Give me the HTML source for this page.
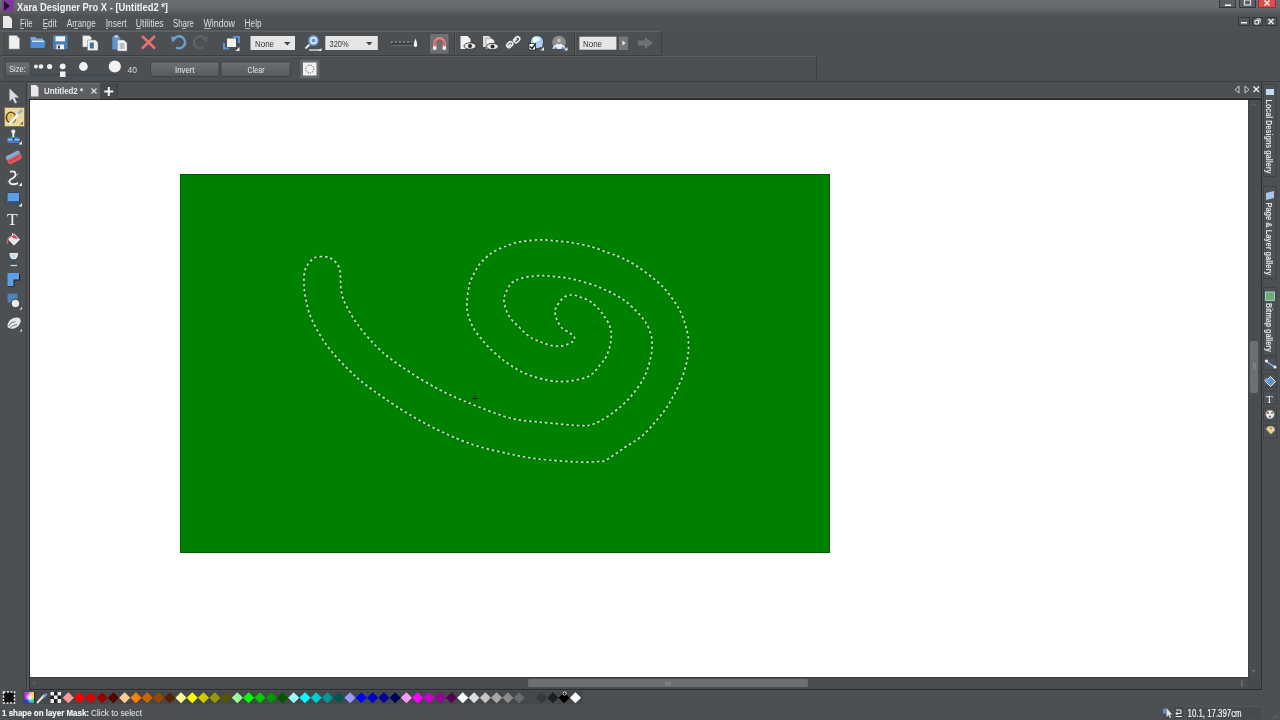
<!DOCTYPE html>
<html><head><meta charset="utf-8">
<style>
*{box-sizing:border-box}
html,body{margin:0;padding:0;width:1280px;height:720px;overflow:hidden;background:#4d5053;font-family:"Liberation Sans",sans-serif;color:#e6e6e6}
.a{position:absolute}
svg{position:absolute;left:0;top:0}
</style></head><body>
<!-- title + menu gradient -->
<div class="a" style="left:0;top:0;width:1280px;height:31px;background:linear-gradient(180deg,#6a6d71 0px,#66696d 7px,#56595c 13px,#4f5255 16px,#4e5154 30px)"></div>
<div class="a" style="left:0;top:29px;width:662px;height:1px;background:#46494c"></div>
<div class="a" style="left:0;top:30px;width:662px;height:1px;background:#5b5e61"></div>
<!-- toolbars -->
<div class="a" style="left:1px;top:31px;width:661px;height:25px;background:#4d5053;border-top:1px solid #5d6063;border-left:1px solid #5a5d60;border-right:1px solid #3c3e40;border-bottom:1px solid #3c3e40"></div>
<div class="a" style="left:1px;top:56px;width:816px;height:26px;background:#4d5053;border-top:1px solid #5d6063;border-left:1px solid #5a5d60;border-right:1px solid #3c3e40;border-bottom:1px solid #3c3e40"></div>
<div class="a" style="left:0;top:81px;width:1280px;height:1px;background:#3c3e41"></div>
<div class="a" style="left:28px;top:97px;width:1234px;height:1px;background:#5c5f62"></div>
<!-- canvas area frame -->
<div class="a" style="left:29px;top:98px;width:1233px;height:592px;background:#47494c;border:1px solid #2a2c2e;border-top:2px solid #2a2c2e"></div>
<div class="a" style="left:30px;top:100px;width:1218px;height:577px;background:#ffffff"></div>
<!-- vertical scrollbar -->
<div class="a" style="left:1248px;top:100px;width:12px;height:577px;background:#4a4d50;border-left:1px solid #424447"></div>
<div class="a" style="left:1250px;top:341px;width:8px;height:52px;background:#6d7073;border-radius:2px"></div>
<!-- horizontal scrollbar -->
<div class="a" style="left:30px;top:677px;width:1218px;height:11px;background:#4a4d50;border-top:1px solid #3a3c3f"></div>
<div class="a" style="left:528px;top:679px;width:280px;height:8px;background:#6d7073;border-radius:2px"></div>
<!-- left toolbox separator -->
<div class="a" style="left:26px;top:82px;width:1px;height:608px;background:#3a3c3f"></div>
<div class="a" style="left:27px;top:82px;width:2px;height:608px;background:#55585b"></div>
<!-- tab row -->
<div class="a" style="left:28px;top:83px;width:72px;height:16px;background:#5d6063;border-top:1px solid #6a6d70"></div>
<div class="a" style="left:100px;top:83px;width:18px;height:16px;background:#46494c;border-right:1px solid #3a3c3f"></div>
<!-- right gallery bar line -->
<div class="a" style="left:1261px;top:82px;width:1px;height:608px;background:#2f3133"></div>

<!-- green rectangle -->
<div class="a" style="left:180px;top:174px;width:650px;height:379px;background:#008000;border:1px solid #005a00"></div>

<!-- title text -->


<svg width="1280" height="720" viewBox="0 0 1280 720" font-family="Liberation Sans" style="will-change:transform">
<text x="17" y="10.5" font-size="10.5" font-weight="bold" fill="#f0f0f0" textLength="151" lengthAdjust="spacingAndGlyphs">Xara Designer Pro X - [Untitled2 *]</text>
<!-- Xara logo -->
<rect x="2" y="0" width="12" height="12" fill="#7d3c98"/>
<path d="M4,1 L10,6 L4,11 Z" fill="#2b0d3a"/>
<!-- window buttons -->
<rect x="1219.5" y="-1" width="16" height="8.5" fill="#5a5d61" stroke="#36393c"/>
<rect x="1225" y="4.5" width="6" height="1.5" fill="#ffffff"/>
<rect x="1239.5" y="-1" width="16" height="8.5" fill="#5a5d61" stroke="#36393c"/>
<rect x="1244.5" y="0" width="6" height="5" fill="none" stroke="#e0e0e0" stroke-width="1.2"/>
<rect x="1258.5" y="-1" width="17" height="8.5" fill="#de4c4c" stroke="#9a3030"/>
<path d="M1264.5,0.5 L1269.5,5.5 M1269.5,0.5 L1264.5,5.5" stroke="#ffe8e8" stroke-width="1.6"/>
<!-- MDI buttons -->
<rect x="1238.5" y="17.5" width="11" height="8" fill="#55585c" stroke="#333538"/>
<rect x="1241" y="22" width="6" height="1.5" fill="#f0f0f0"/>
<rect x="1252.5" y="17.5" width="10" height="8" fill="#55585c" stroke="#333538"/>
<path d="M1255,20.5 h3.5 v3.5 h-3.5 z M1256.5,19 h3.5 v3.5" fill="none" stroke="#f0f0f0" stroke-width="1"/>
<rect x="1265.5" y="17.5" width="11" height="8" fill="#55585c" stroke="#333538"/>
<path d="M1268.5,19 L1273.5,24 M1273.5,19 L1268.5,24" stroke="#f0f0f0" stroke-width="1.4"/>

<!-- menu doc icon -->
<path d="M3,16 h6 l3,3 v9 h-9 z" fill="#e8e8e8"/>
<!-- menu -->
<g font-size="10" fill="#dedede">
<text x="20" y="26.5" textLength="12.5" lengthAdjust="spacingAndGlyphs">File</text>
<text x="42.7" y="26.5" textLength="14" lengthAdjust="spacingAndGlyphs">Edit</text>
<text x="66.7" y="26.5" textLength="29" lengthAdjust="spacingAndGlyphs">Arrange</text>
<text x="105.7" y="26.5" textLength="21" lengthAdjust="spacingAndGlyphs">Insert</text>
<text x="135.7" y="26.5" textLength="28" lengthAdjust="spacingAndGlyphs">Utilities</text>
<text x="173" y="26.5" textLength="21" lengthAdjust="spacingAndGlyphs">Share</text>
<text x="203.5" y="26.5" textLength="31.5" lengthAdjust="spacingAndGlyphs">Window</text>
<text x="244.6" y="26.5" textLength="17" lengthAdjust="spacingAndGlyphs">Help</text>
</g>
<g stroke="#cfcfcf" stroke-width="0.8">
<path d="M20,28.5 h4 M43,28.5 h4 M74,28.5 h4 M106,28.5 h2 M136,28.5 h5 M182,28.5 h4 M204,28.5 h7 M245,28.5 h5"/>
</g>

<!-- ===== Toolbar row 1 ===== -->
<!-- new -->
<path d="M9,35.5 h7.5 l3,3 v10.5 h-10.5 z" fill="#f0f0f0" stroke="#9a9a9a" stroke-width="0.6"/>
<path d="M16.5,35.5 v3 h3" fill="#c8c8c8"/>
<!-- open -->
<path d="M30.5,37 h5 l1.5,1.5 h6 v2 h-12.5 z" fill="#7aa8d8"/>
<path d="M30.5,40.5 h15 l-1,7.5 h-14 z" fill="#4e8fd6"/>
<path d="M32,40.5 h12 v1.5 h-12 z" fill="#dbe9f7"/>
<!-- save -->
<rect x="53" y="35.2" width="14.5" height="14" rx="1" fill="#4c7fb8"/>
<rect x="55.5" y="36.3" width="9.5" height="5" fill="#f4f4f4"/>
<rect x="56.5" y="44.5" width="7.5" height="4.7" fill="#f4f4f4"/>
<rect x="58" y="45.5" width="1.8" height="3" fill="#333"/>
<!-- copy -->
<path d="M82.5,35.6 h7 l2,2 v9.5 h-9 z" fill="#efefef" stroke="#777" stroke-width="0.5"/>
<path d="M87.5,40 h8 l2.5,2.5 v8 h-10.5 z" fill="#efefef" stroke="#777" stroke-width="0.5"/>
<rect x="89.8" y="42.5" width="4" height="6" fill="#3d6ea8"/>
<!-- paste -->
<rect x="112.3" y="36.5" width="8" height="13" rx="1" fill="#5d95d0"/>
<rect x="114.5" y="35.3" width="3.5" height="2" fill="#dde"/>
<path d="M117.5,40 h6.5 l3,3 v8 h-9.5 z" fill="#f0f0f0" stroke="#888" stroke-width="0.5"/>
<path d="M119.5,44 h5 M119.5,46 h5 M119.5,48 h5" stroke="#666" stroke-width="0.7"/>
<!-- delete -->
<path d="M142.8,36.8 L154.2,47.8 M154.2,36.8 L142.8,47.8" stroke="#e67272" stroke-width="2.6" stroke-linecap="round"/>
<!-- undo -->
<path d="M174,39 A6,6 0 1 1 176,47.5" fill="none" stroke="#6b9fd6" stroke-width="2.4"/>
<path d="M171,36.5 L177.5,37.5 L172.5,42.5 Z" fill="#6b9fd6"/>
<!-- redo disabled -->
<path d="M205,39 A6,6 0 1 0 203,47.5" fill="none" stroke="#5f6265" stroke-width="2.4"/>
<path d="M208,36.5 L201.5,37.5 L206.5,42.5 Z" fill="#5f6265"/>
<!-- arrange -->
<path d="M224,43 v5.5 h5" fill="none" stroke="#5b93cf" stroke-width="2"/>
<path d="M239,43 v-6 h-6" fill="none" stroke="#5b93cf" stroke-width="2"/>
<rect x="227" y="38.5" width="9" height="8.5" fill="#f2f2f2"/>
<path d="M235.5,51 h4 v-4 z" fill="#f0f0f0"/>

<!-- None dropdown -->
<rect x="250.5" y="36" width="44.5" height="14" fill="#e6e6e6"/>
<text x="255" y="46.5" font-size="9.5" fill="#333" textLength="19" lengthAdjust="spacingAndGlyphs">None</text>
<path d="M284,42 h6.5 l-3.25,3.5 z" fill="#444"/>
<!-- zoom icon -->
<circle cx="313.5" cy="40.5" r="4.7" fill="#cfe0f5" stroke="#5a8fc8" stroke-width="1.6"/>
<circle cx="313.5" cy="40.5" r="1.8" fill="#5a8fc8"/>
<path d="M309.5,44.5 L305.5,48.5" stroke="#e8e8e8" stroke-width="2"/>
<path d="M309,50 h11" stroke="#e8e8e8" stroke-width="1.3"/>
<path d="M318,51 h3.5 v-3 z" fill="#eee"/>
<!-- 320% dropdown -->
<rect x="325.3" y="36" width="52.5" height="14" fill="#e6e6e6"/>
<text x="329.5" y="46.5" font-size="9.5" fill="#333" textLength="19" lengthAdjust="spacingAndGlyphs">320%</text>
<path d="M366,42 h6.5 l-3.25,3.5 z" fill="#444"/>
<!-- ruler -->
<path d="M391,42.2 h21" stroke="#e6e6e6" stroke-width="1" stroke-dasharray="1.5 2.6"/>
<path d="M391,43.3 h22" stroke="#2e3033" stroke-width="1"/>
<path d="M391,45.8 h22" stroke="#6a6d70" stroke-width="0.8"/>
<path d="M415.5,38.5 q1.7,4 1.7,6.5 q0,2 -1.7,2 q-1.7,0 -1.7,-2 q0,-2.5 1.7,-6.5 z" fill="#f4f4f4"/>
<path d="M418,40 l1.5,6 l1.5,-6" fill="none" stroke="#404346" stroke-width="0.7"/>
<!-- magnet button -->
<rect x="429.5" y="33.5" width="19.5" height="20.5" fill="#6d7073" stroke="#45484b" stroke-width="0.8"/>
<path d="M434.7,47 v-3.5 a4.8,4.8 0 0 1 9.6,0 v3.5" fill="none" stroke="#e88282" stroke-width="3.2"/>
<path d="M434.7,43.5 a4.8,4.8 0 0 1 9.6,0" fill="none" stroke="#6a3030" stroke-width="0.6" transform="translate(0,1.2) scale(1)"/>
<rect x="433" y="46.5" width="3.4" height="3.2" fill="#f8f8f8"/>
<rect x="442.6" y="46.5" width="3.4" height="3.2" fill="#f8f8f8"/>
<!-- separators -->
<path d="M454.5,32 v23" stroke="#3a3c3f"/>
<path d="M455.5,32 v23" stroke="#5a5d60"/>
<path d="M574.5,32 v23" stroke="#3a3c3f"/>
<path d="M575.5,32 v23" stroke="#5a5d60"/>
<!-- page eye -->
<path d="M460.5,36 h7 l3,3 v10 h-10 z" fill="#f0f0f0"/>
<ellipse cx="470" cy="46" rx="6" ry="3.2" fill="#e8e8e8" stroke="#222" stroke-width="0.8"/>
<circle cx="470" cy="46" r="2" fill="#2a2a2a"/>
<!-- pages eye -->
<path d="M483,36 h6 l2,2 v9 h-8 z" fill="#dcdcdc"/>
<path d="M486,38.5 h6 l2.5,2.5 v8 h-8.5 z" fill="#f0f0f0" stroke="#666" stroke-width="0.4"/>
<ellipse cx="492.5" cy="46.5" rx="6" ry="3.2" fill="#e8e8e8" stroke="#222" stroke-width="0.8"/>
<circle cx="492.5" cy="46.5" r="2" fill="#2a2a2a"/>
<!-- link -->
<path d="M508,47 l3,-3 M513.5,41.5 l3,-3" stroke="#eaeaea" stroke-width="2.2"/>
<rect x="506.5" y="42.5" width="6.5" height="4.5" rx="2.2" transform="rotate(-45 509.7 44.7)" fill="none" stroke="#eaeaea" stroke-width="1.6"/>
<rect x="513.5" y="37.5" width="6.5" height="4.5" rx="2.2" transform="rotate(-45 516.7 39.7)" fill="none" stroke="#eaeaea" stroke-width="1.6"/>
<!-- globe check -->
<circle cx="537" cy="42" r="6.6" fill="#a8ccf0" stroke="#2a3a4a" stroke-width="0.8"/>
<path d="M533,37.5 q4,-1.5 7,1 q-1,3.5 -4,3 q-1,2 -3,1 z" fill="#f2f8ff"/>
<path d="M539,44 q2,1 3,3" stroke="#f0f6ff" stroke-width="1" fill="none"/>
<rect x="529" y="43.5" width="6.5" height="6.5" fill="#fff" stroke="#222" stroke-width="0.8"/>
<path d="M530,46.5 l2,2 l3,-4" fill="none" stroke="#111" stroke-width="1.3"/>
<path d="M540.5,50.5 h3.5 v-3.5 z" fill="#eee"/>
<!-- cloud -->
<circle cx="559" cy="42.5" r="6.8" fill="#8a8d90"/>
<circle cx="559" cy="40.5" r="2" fill="#c8b8b8"/>
<path d="M552.5,49 q0.5,-3.5 3,-4 q1.5,-2 3.5,-0.5 q2,-1.5 3.5,0.5 q2.5,0.5 3,4 z" fill="#e6eef8"/>
<path d="M553.5,49 q1,-2 2.5,-2.2 l1.5,2.2 M561,49 l1.5,-2.2 q1.5,0.2 2.5,2.2" fill="#5f95d0"/>
<path d="M564,50.5 h3.5 v-3.5 z" fill="#eee"/>
<!-- None box 2 -->
<rect x="579.4" y="36.7" width="37" height="13" fill="#e6e6e6"/>
<text x="583" y="46.7" font-size="9.5" fill="#333" textLength="19" lengthAdjust="spacingAndGlyphs">None</text>
<rect x="619" y="36.5" width="9" height="13.5" fill="#75787b"/>
<path d="M622.5,40.5 l3,2.5 l-3,2.5 z" fill="#f0f0f0"/>
<!-- arrow right gray -->
<path d="M638,40.5 h7 v-3.5 l8,6 l-8,6 v-3.5 h-7 z" fill="#6e7174"/>

<!-- ===== Toolbar row 2 ===== -->
<rect x="5.5" y="62" width="24.5" height="14" rx="1" fill="url(#btn)" stroke="#3f4143" stroke-width="0.6"/>
<text x="9" y="72.3" font-size="9.5" fill="#e4e4e4" textLength="17" lengthAdjust="spacingAndGlyphs">Size:</text>
<path d="M32.5,75 h85" stroke="#3a4a58" stroke-width="1.6"/>
<circle cx="35.9" cy="66.5" r="1.9" fill="#f2f2f2"/>
<circle cx="41" cy="66.5" r="2.3" fill="#f2f2f2"/>
<circle cx="49.6" cy="66.5" r="2.6" fill="#f2f2f2"/>
<circle cx="62.7" cy="66.3" r="2.9" fill="#f2f2f2"/>
<circle cx="83.4" cy="66.5" r="4.4" fill="#f2f2f2"/>
<circle cx="114.8" cy="66.5" r="6.1" fill="#f2f2f2"/>
<rect x="60" y="71.5" width="5.5" height="5.5" fill="#f2f2f2"/>
<text x="127.5" y="72.8" font-size="9.5" fill="#d8d8d8" textLength="9.5" lengthAdjust="spacingAndGlyphs">40</text>
<!-- Invert / Clear buttons -->
<defs>
<linearGradient id="btn" x1="0" y1="0" x2="0" y2="1">
<stop offset="0" stop-color="#6e7174"/><stop offset="1" stop-color="#56595c"/>
</linearGradient>
</defs>
<rect x="150.5" y="62" width="68.5" height="14.5" rx="1.5" fill="url(#btn)" stroke="#3c3e40" stroke-width="0.8"/>
<text x="175" y="72.5" font-size="9.5" fill="#e8e8e8" textLength="19.5" lengthAdjust="spacingAndGlyphs">Invert</text>
<rect x="221" y="62" width="69" height="14.5" rx="1.5" fill="url(#btn)" stroke="#3c3e40" stroke-width="0.8"/>
<text x="247.5" y="72.5" font-size="9.5" fill="#e8e8e8" textLength="17" lengthAdjust="spacingAndGlyphs">Clear</text>
<rect x="300" y="59.6" width="19.5" height="19" fill="#66696c" stroke="#55585a" stroke-width="0.8"/>
<rect x="303" y="62.5" width="13.5" height="13" fill="#f2f2f2"/>
<circle cx="309.8" cy="69" r="4" fill="none" stroke="#555" stroke-width="1" stroke-dasharray="1.2 1.2"/>

<!-- ===== Tab row ===== -->
<path d="M31,85 h5 l2.5,2.5 v9 h-7.5 z" fill="#e8e8e8"/>
<text x="44" y="94" font-size="9.5" font-weight="bold" fill="#ececec" textLength="39" lengthAdjust="spacingAndGlyphs">Untitled2 *</text>
<path d="M91.5,88.5 L96.5,93.5 M96.5,88.5 L91.5,93.5" stroke="#e0e0e0" stroke-width="1.2"/>
<path d="M108.8,87 v9 M104.3,91.5 h9" stroke="#f4f4f4" stroke-width="2"/>
<!-- tab right arrows -->
<path d="M1239,86 v7 l-4,-3.5 z" fill="none" stroke="#d8d8d8" stroke-width="0.9"/>
<path d="M1245,86 v7 l4,-3.5 z" fill="none" stroke="#d8d8d8" stroke-width="0.9"/>
<path d="M1253.5,86.5 L1259,92 M1259,86.5 L1253.5,92" stroke="#eeeeee" stroke-width="1.4"/>

<!-- ===== Left toolbox ===== -->
<path d="M9.5,88.5 v13 l3,-3 l2.5,5 l2,-1 l-2.5,-5 h4.5 z" fill="#dcdcdc"/>
<rect x="4.5" y="107.5" width="20" height="19" fill="#ecd898" stroke="#7a6a40" stroke-width="0.7"/>
<ellipse cx="11" cy="117.5" rx="4.6" ry="5.2" fill="#e6c460" stroke="#5e4a1e" stroke-width="1.6"/>
<path d="M10,123.5 L20.5,111.5" stroke="#f4f4f4" stroke-width="2.8" stroke-linecap="round"/>
<path d="M19,113.2 L21.3,110.5" stroke="#8ab4dc" stroke-width="2.8" stroke-linecap="round"/>
<path d="M20,124.5 h3 v-3 z" fill="#555"/>
<!-- stamp -->
<circle cx="13.3" cy="131.5" r="2" fill="#f0f0f0"/>
<rect x="12.3" y="133" width="2" height="4" fill="#f0f0f0"/>
<path d="M7.5,138.5 q0,-1.5 2,-1.5 h8 q2,0 2,1.5 v4.5 h-12 z" fill="#3f7dc0"/>
<rect x="7.5" y="139" width="12" height="1.3" fill="#a8cbea"/>
<circle cx="13.5" cy="139.5" r="1" fill="#1a2a4a"/>
<path d="M18.5,144.5 h3.5 v-3.5 z" fill="#eee"/>
<!-- eraser -->
<g transform="rotate(-28 14 157.5)">
<rect x="6.5" y="153" width="15" height="9" rx="2" fill="#e05858"/>
<rect x="6.5" y="153" width="15" height="3.5" rx="1.5" fill="#78b0e0"/>
<path d="M8,159 h12" stroke="#b03a3a" stroke-width="0.8"/>
</g>
<!-- shape contour -->
<path d="M7.5,182 L19,173.5" stroke="#c89aa0" stroke-width="1"/>
<path d="M10,171.8 q5.5,-1.5 5.5,2.5 q0,3 -4.5,5 q-3,2 -0.5,4.3 q3,1.5 7.5,-0.5" fill="none" stroke="#f0f0f0" stroke-width="1.8"/>
<path d="M18.5,186 h3.5 v-3.5 z" fill="#eee"/>
<!-- rectangle -->
<rect x="7" y="192.5" width="12.5" height="11" rx="0.8" fill="#5d9ee0" stroke="#243a55" stroke-width="0.8"/>
<rect x="7.4" y="201" width="11.7" height="2.2" fill="#2f5a8a"/>
<path d="M18.5,206.5 h3.5 v-3.5 z" fill="#eee"/>
<!-- T -->
<text x="7" y="225.3" font-family="Liberation Serif" font-size="17.5" fill="#f0f0f0">T</text>
<!-- fill -->
<path d="M14,234.5 l5,5 l-5,5 l-5,-5 z" fill="#e9e0e0" stroke="#f2f2f2" stroke-width="1.5"/>
<path d="M11.5,237 l2.5,-2.5 l4,4 q-3,1 -6.5,-1.5 z" fill="#c84a58"/>
<path d="M12.5,233 v2.5" stroke="#ddd" stroke-width="1"/>
<path d="M10.5,236 q-4,3 -3,8" fill="none" stroke="#c06a78" stroke-width="1.4"/>
<!-- transparency -->
<path d="M9.5,253 h8.5 q0,6 -4.25,6.5 q-4.25,-0.5 -4.25,-6.5 z" fill="#e8eef4"/>
<path d="M10.8,254 h6 q-0.5,3.5 -3,4 q-2.5,-0.5 -3,-4 z" fill="#c8dcee"/>
<path d="M13.75,259.5 v5" stroke="#2e4a6a" stroke-width="1.6"/>
<path d="M10.5,265.5 h6.5" stroke="#cfdff0" stroke-width="1.2"/>
<!-- bevel -->
<path d="M8.5,274 h11.5 v6.5 h-5.5 v6 h-6 z" fill="#1a1c1f"/>
<path d="M7.5,273 h11.5 v6.5 h-5.5 v6.5 h-6 z" fill="#5e9ee6"/>
<!-- shadow -->
<rect x="7.5" y="293.5" width="10" height="9" rx="1.5" fill="#4f8cd0" opacity="0.85"/>
<circle cx="15.5" cy="303.5" r="4.3" fill="#ececec" stroke="#2a2c2e" stroke-width="0.9"/>
<path d="M19.5,309.5 h2.5 v-2.5 z" fill="#eee"/>
<!-- feather -->
<path d="M7.5,327 q-0.5,-6 5,-8.5 q5,-2 7.5,0 q1.5,2 0,5 q-2,4 -6,5 q-4,1 -6.5,-1.5 z" fill="#e6e6e6"/>
<path d="M8.5,326 q2,-4 7,-4.5 M9.5,328.5 q2,-3 7.5,-4" fill="none" stroke="#5a5d60" stroke-width="0.8"/>
<path d="M19.5,331.5 h2.5 v-2.5 z" fill="#eee"/>

<!-- ===== Right gallery ===== -->
<rect x="1263.5" y="84.5" width="12.5" height="92" fill="#4f5255" stroke="#3c3e41" stroke-width="0.8"/>
<rect x="1266" y="89" width="8" height="6" fill="#c0dcf4"/>
<text transform="translate(1266,99.5) rotate(90)" font-size="9" font-weight="bold" fill="#e4e4e4" textLength="74" lengthAdjust="spacingAndGlyphs">Local Designs gallery</text>
<rect x="1263.5" y="186.5" width="12.5" height="92" fill="#4f5255" stroke="#3c3e41" stroke-width="0.8"/>
<path d="M1266,193 l8,-2 v7 l-8,2 z" fill="#a8c8e8"/>
<text transform="translate(1266,202.5) rotate(90)" font-size="9" font-weight="bold" fill="#e4e4e4" textLength="73" lengthAdjust="spacingAndGlyphs">Page &amp; Layer gallery</text>
<rect x="1263.5" y="287.5" width="12.5" height="68" fill="#4f5255" stroke="#3c3e41" stroke-width="0.8"/>
<rect x="1265.5" y="292" width="9" height="8.5" fill="#6ab06a" stroke="#b8d8f0" stroke-width="0.8"/>
<text transform="translate(1266,303) rotate(90)" font-size="9" font-weight="bold" fill="#e4e4e4" textLength="49" lengthAdjust="spacingAndGlyphs">Bitmap gallery</text>
<g stroke="#3c3e41" stroke-width="0.8" fill="#4f5255">
<rect x="1263.5" y="357" width="13" height="13"/>
<rect x="1263.5" y="374" width="13" height="13"/>
<rect x="1263.5" y="391" width="13" height="13"/>
<rect x="1263.5" y="408" width="13" height="13"/>
<rect x="1263.5" y="425" width="13" height="13"/>
</g>
<path d="M1266.5,361 L1275,367" stroke="#3a6a9a" stroke-width="2.4"/>
<path d="M1267.5,362.5 L1274,366.5" stroke="#dfe8f0" stroke-width="0.8"/>
<circle cx="1266.5" cy="361" r="1.6" fill="#f0f0f0"/><circle cx="1275" cy="367" r="1.6" fill="#f0f0f0"/>
<path d="M1270.5,376.5 l5,5 l-5,5 l-5,-5 z" fill="#5f95cf" stroke="#e8e8e8" stroke-width="1"/>
<circle cx="1266.5" cy="380.5" r="2.2" fill="#7fa8d8"/>
<rect x="1265.5" y="392.5" width="9" height="3" fill="none" stroke="#34507a" stroke-width="0.8" stroke-dasharray="1 0.8"/>
<text x="1266" y="403" font-family="Liberation Serif" font-size="11" fill="#f0f0f0">T</text>
<circle cx="1270" cy="414.5" r="4.2" fill="#ececec" stroke="#9a9a9a" stroke-width="0.6"/>
<circle cx="1268" cy="413" r="1.1" fill="#d04040"/><circle cx="1272" cy="413" r="1.1" fill="#40a040"/><circle cx="1270" cy="416.5" r="1.1" fill="#4060c0"/>
<path d="M1265.5,429 l3,-3 h4 l2.5,2.5 v2 l-4,4 z" fill="#e6d4a0" stroke="#6a5a30" stroke-width="0.7"/>
<circle cx="1271" cy="428.5" r="0.8" fill="#6a5a30"/>
<!-- scrollbar arrows -->
<path d="M1251,106 l2.5,-2.5 l2.5,2.5" fill="none" stroke="#6a6d70" stroke-width="1"/>
<path d="M1251,670 h5 l-2.5,2.5 z" fill="#6a6d70"/>
<path d="M36,683 l-2.5,-2.5 v5 z" fill="#5e6164"/>
<path d="M1242,680 v7" stroke="#6a6d70" stroke-width="1.5"/>
<path d="M1253,364 h3 M1253,366 h3 M1253,368 h3" stroke="#aaa" stroke-width="0.5"/>
<path d="M666,681.5 v4 M668,681.5 v4 M670,681.5 v4" stroke="#aaa" stroke-width="0.5"/>

<!-- ===== Palette ===== -->
<rect x="23" y="690.5" width="560" height="13.5" fill="#45484b"/>
<rect x="3.5" y="692" width="11" height="11" fill="#111" stroke="#f0f0f0" stroke-width="1.5" stroke-dasharray="2 1.5"/>
<defs>
<linearGradient id="rb" x1="0" y1="0" x2="1" y2="1">
<stop offset="0" stop-color="#ff3030"/><stop offset="0.35" stop-color="#ffff40"/><stop offset="0.5" stop-color="#ffffff"/><stop offset="0.7" stop-color="#40ff80"/><stop offset="1" stop-color="#2040ff"/>
</linearGradient>
<linearGradient id="rb2" x1="0" y1="1" x2="1" y2="0">
<stop offset="0" stop-color="#8020ff" stop-opacity="0.8"/><stop offset="0.5" stop-color="#fff" stop-opacity="0"/><stop offset="1" stop-color="#ff8000" stop-opacity="0.3"/>
</linearGradient>
</defs>
<defs><filter id="bl" x="-10%" y="-10%" width="120%" height="120%"><feGaussianBlur stdDeviation="1.3"/></filter>
<clipPath id="rbc"><rect x="24.5" y="692" width="10.5" height="11"/></clipPath>
<radialGradient id="wc"><stop offset="0" stop-color="#fff"/><stop offset="1" stop-color="#fff" stop-opacity="0"/></radialGradient></defs>
<g clip-path="url(#rbc)"><g filter="url(#bl)">
<rect x="22" y="690" width="8" height="8" fill="#d030e0"/><rect x="30" y="690" width="8" height="8" fill="#ffd020"/>
<rect x="22" y="698" width="8" height="8" fill="#3030e0"/><rect x="30" y="698" width="8" height="8" fill="#20d080"/>
</g><circle cx="29.8" cy="697.5" r="4.5" fill="url(#wc)"/></g>
<rect x="34" y="692" width="1.2" height="11" fill="#1a3a1a"/>
<path d="M37,703 l7.5,-8" stroke="#e8e8e8" stroke-width="2"/>
<path d="M43,696.5 l3,-3.5 l1.5,1.5 l-3,3.5 z" fill="#7a9fd8"/>
<rect x="50.5" y="692" width="10.5" height="11" fill="#222"/>
<g fill="#f0f0f0">
<rect x="50.5" y="692" width="3.5" height="3.5"/><rect x="57.5" y="692" width="3.5" height="3.5"/>
<rect x="54" y="695.5" width="3.5" height="3.5"/>
<rect x="50.5" y="699" width="3.5" height="4"/><rect x="57.5" y="699" width="3.5" height="4"/>
</g>
<path d="M68.30,692.25 L73.85,697.80 L68.30,703.35 L62.75,697.80 Z" fill="#ff9999"/>
<path d="M79.57,692.25 L85.12,697.80 L79.57,703.35 L74.02,697.80 Z" fill="#ff0000"/>
<path d="M90.84,692.25 L96.39,697.80 L90.84,703.35 L85.29,697.80 Z" fill="#dd0000"/>
<path d="M102.11,692.25 L107.66,697.80 L102.11,703.35 L96.56,697.80 Z" fill="#990000"/>
<path d="M113.38,692.25 L118.93,697.80 L113.38,703.35 L107.83,697.80 Z" fill="#550000"/>
<path d="M124.65,692.25 L130.20,697.80 L124.65,703.35 L119.10,697.80 Z" fill="#ffcc99"/>
<path d="M135.92,692.25 L141.47,697.80 L135.92,703.35 L130.37,697.80 Z" fill="#ff8000"/>
<path d="M147.19,692.25 L152.74,697.80 L147.19,703.35 L141.64,697.80 Z" fill="#cc6600"/>
<path d="M158.46,692.25 L164.01,697.80 L158.46,703.35 L152.91,697.80 Z" fill="#994400"/>
<path d="M169.73,692.25 L175.28,697.80 L169.73,703.35 L164.18,697.80 Z" fill="#552200"/>
<path d="M181.00,692.25 L186.55,697.80 L181.00,703.35 L175.45,697.80 Z" fill="#ffff99"/>
<path d="M192.27,692.25 L197.82,697.80 L192.27,703.35 L186.72,697.80 Z" fill="#ffff00"/>
<path d="M203.54,692.25 L209.09,697.80 L203.54,703.35 L197.99,697.80 Z" fill="#cccc00"/>
<path d="M214.81,692.25 L220.36,697.80 L214.81,703.35 L209.26,697.80 Z" fill="#999900"/>
<path d="M226.08,692.25 L231.63,697.80 L226.08,703.35 L220.53,697.80 Z" fill="#555500"/>
<path d="M237.35,692.25 L242.90,697.80 L237.35,703.35 L231.80,697.80 Z" fill="#99ff99"/>
<path d="M248.62,692.25 L254.17,697.80 L248.62,703.35 L243.07,697.80 Z" fill="#00ff00"/>
<path d="M259.89,692.25 L265.44,697.80 L259.89,703.35 L254.34,697.80 Z" fill="#00cc00"/>
<path d="M271.16,692.25 L276.71,697.80 L271.16,703.35 L265.61,697.80 Z" fill="#009900"/>
<path d="M282.43,692.25 L287.98,697.80 L282.43,703.35 L276.88,697.80 Z" fill="#005500"/>
<path d="M293.70,692.25 L299.25,697.80 L293.70,703.35 L288.15,697.80 Z" fill="#99ffff"/>
<path d="M304.97,692.25 L310.52,697.80 L304.97,703.35 L299.42,697.80 Z" fill="#00ffff"/>
<path d="M316.24,692.25 L321.79,697.80 L316.24,703.35 L310.69,697.80 Z" fill="#00cccc"/>
<path d="M327.51,692.25 L333.06,697.80 L327.51,703.35 L321.96,697.80 Z" fill="#009999"/>
<path d="M338.78,692.25 L344.33,697.80 L338.78,703.35 L333.23,697.80 Z" fill="#005555"/>
<path d="M350.05,692.25 L355.60,697.80 L350.05,703.35 L344.50,697.80 Z" fill="#9999ff"/>
<path d="M361.32,692.25 L366.87,697.80 L361.32,703.35 L355.77,697.80 Z" fill="#0000ff"/>
<path d="M372.59,692.25 L378.14,697.80 L372.59,703.35 L367.04,697.80 Z" fill="#0000cc"/>
<path d="M383.86,692.25 L389.41,697.80 L383.86,703.35 L378.31,697.80 Z" fill="#000099"/>
<path d="M395.13,692.25 L400.68,697.80 L395.13,703.35 L389.58,697.80 Z" fill="#000055"/>
<path d="M406.40,692.25 L411.95,697.80 L406.40,703.35 L400.85,697.80 Z" fill="#ff99ff"/>
<path d="M417.67,692.25 L423.22,697.80 L417.67,703.35 L412.12,697.80 Z" fill="#ff00ff"/>
<path d="M428.94,692.25 L434.49,697.80 L428.94,703.35 L423.39,697.80 Z" fill="#cc00cc"/>
<path d="M440.21,692.25 L445.76,697.80 L440.21,703.35 L434.66,697.80 Z" fill="#990099"/>
<path d="M451.48,692.25 L457.03,697.80 L451.48,703.35 L445.93,697.80 Z" fill="#550055"/>
<path d="M462.75,692.25 L468.30,697.80 L462.75,703.35 L457.20,697.80 Z" fill="#ffffff"/>
<path d="M474.02,692.25 L479.57,697.80 L474.02,703.35 L468.47,697.80 Z" fill="#dcdcdc"/>
<path d="M485.29,692.25 L490.84,697.80 L485.29,703.35 L479.74,697.80 Z" fill="#c4c4c4"/>
<path d="M496.56,692.25 L502.11,697.80 L496.56,703.35 L491.01,697.80 Z" fill="#a8a8a8"/>
<path d="M507.83,692.25 L513.38,697.80 L507.83,703.35 L502.28,697.80 Z" fill="#8a8a8a"/>
<path d="M519.10,692.25 L524.65,697.80 L519.10,703.35 L513.55,697.80 Z" fill="#6a6a6a"/>
<path d="M530.37,692.25 L535.92,697.80 L530.37,703.35 L524.82,697.80 Z" fill="#47494b"/>
<path d="M541.64,692.25 L547.19,697.80 L541.64,703.35 L536.09,697.80 Z" fill="#383838"/>
<path d="M552.91,692.25 L558.46,697.80 L552.91,703.35 L547.36,697.80 Z" fill="#1e1e1e"/>
<path d="M564.18,692.25 L569.73,697.80 L564.18,703.35 L558.63,697.80 Z" fill="#000000"/>
<path d="M575.45,692.25 L581.00,697.80 L575.45,703.35 L569.90,697.80 Z" fill="#ffffff"/>
<circle cx="564.6" cy="693.5" r="1.6" fill="none" stroke="#fff" stroke-width="0.8"/>

<!-- ===== Status bar ===== -->
<text x="2" y="716" font-size="9.5" fill="#f4f4f4" font-weight="bold" stroke="#f4f4f4" stroke-width="0.15" textLength="87" lengthAdjust="spacingAndGlyphs">1 shape on layer Mask:</text>
<text x="91" y="716" font-size="9.5" fill="#ececec" textLength="51" lengthAdjust="spacingAndGlyphs">Click to select</text>
<rect x="1162.5" y="707" width="10" height="12" fill="#4a4d50"/>
<rect x="1163" y="708.5" width="3" height="5" fill="#5a90d0"/>
<path d="M1166.5,708 v9 l2,-2 l1.5,3 l1.2,-0.6 l-1.5,-3 h2.5 z" fill="#e0e0e0"/>
<rect x="1174" y="707" width="9.5" height="12" fill="#45484b"/>
<path d="M1176,710 h5 v3.5 h-5 M1177.5,711.8 l-1.5,1.7 l1.5,1.7 M1175.5,716.5 h6.5" fill="none" stroke="#eee" stroke-width="1"/>
<rect x="1185" y="706.5" width="77.5" height="13.5" fill="#484b4e" stroke="#5a5d60" stroke-width="0.6"/>
<text x="1187.6" y="716.5" font-size="10" fill="#f0f0f0" stroke="#f0f0f0" stroke-width="0.2" textLength="54" lengthAdjust="spacingAndGlyphs">10.1, 17.397cm</text>
<path d="M1272,719 l6,-6 M1275,719 l3,-3" stroke="#6a6d70" stroke-width="0.8"/>

<!-- ===== Spiral selection ===== -->
<path d="M322.0,256.5 C319.8,256.7 316.4,256.6 314.0,258.0 C311.6,259.4 309.1,262.7 307.5,265.0 C305.9,267.3 305.1,269.0 304.5,272.0 C303.9,275.0 303.9,279.2 304.0,283.0 C304.1,286.8 304.0,289.7 305.0,295.0 C306.0,300.3 307.5,308.3 310.0,315.0 C312.5,321.7 316.3,328.8 320.0,335.0 C323.7,341.2 327.2,346.2 332.0,352.0 C336.8,357.8 343.3,364.5 349.0,370.0 C354.7,375.5 357.2,378.3 366.0,385.0 C374.8,391.7 390.0,402.5 402.0,410.0 C414.0,417.5 426.0,424.2 438.0,430.0 C450.0,435.8 462.0,441.0 474.0,445.0 C486.0,449.0 499.2,451.7 510.0,454.0 C520.8,456.3 527.7,457.7 539.0,459.0 C550.3,460.3 568.2,461.6 578.0,462.0 C587.8,462.4 593.2,461.9 598.0,461.5 C602.8,461.1 602.7,461.8 607.0,459.5 C611.3,457.2 618.2,451.9 624.0,448.0 C629.8,444.1 636.7,440.5 642.0,436.0 C647.3,431.5 651.8,425.8 656.0,421.0 C660.2,416.2 663.7,412.0 667.0,407.0 C670.3,402.0 673.3,396.3 676.0,391.0 C678.7,385.7 681.1,380.5 683.0,375.0 C684.9,369.5 686.6,363.0 687.5,358.0 C688.4,353.0 688.6,349.5 688.5,345.0 C688.4,340.5 688.6,337.0 687.0,331.0 C685.4,325.0 683.2,316.5 679.0,309.0 C674.8,301.5 668.8,293.0 662.0,286.0 C655.2,279.0 644.7,271.7 638.0,267.0 C631.3,262.3 626.8,260.3 622.0,258.0 C617.2,255.7 613.8,254.8 609.0,253.0 C604.2,251.2 598.8,249.0 593.0,247.3 C587.2,245.6 580.2,244.1 574.0,243.0 C567.8,241.9 561.1,241.3 555.6,240.8 C550.1,240.3 545.7,239.8 541.0,239.8 C536.3,239.8 531.3,240.4 527.5,240.8 C523.7,241.2 521.1,241.5 518.0,242.2 C514.9,242.9 512.1,243.9 509.0,245.0 C505.9,246.1 502.7,247.1 499.4,248.8 C496.1,250.4 492.4,252.3 489.0,255.0 C485.6,257.7 481.8,261.3 479.0,265.0 C476.2,268.7 474.2,273.5 472.5,277.0 C470.8,280.5 469.9,280.7 469.0,286.0 C468.1,291.3 466.3,302.2 467.0,309.0 C467.7,315.8 470.2,321.5 473.0,327.0 C475.8,332.5 480.2,337.5 484.0,342.0 C487.8,346.5 491.7,350.2 496.0,354.0 C500.3,357.8 504.5,361.5 510.0,365.0 C515.5,368.5 521.0,372.2 529.0,375.0 C537.0,377.8 548.3,381.2 558.0,381.5 C567.7,381.8 580.0,379.8 587.0,377.0 C594.0,374.2 596.7,368.7 600.0,365.0 C603.3,361.3 605.2,359.2 607.0,355.0 C608.8,350.8 610.5,344.7 611.0,340.0 C611.5,335.3 611.5,331.5 610.0,327.0 C608.5,322.5 605.2,317.2 602.0,313.0 C598.8,308.8 594.7,304.7 591.0,302.0 C587.3,299.3 583.3,298.2 580.0,297.0 C576.7,295.8 573.8,294.8 571.0,295.0 C568.2,295.2 565.3,296.2 563.0,298.0 C560.7,299.8 558.3,303.7 557.0,306.0 C555.7,308.3 555.0,309.7 555.0,312.0 C555.0,314.3 555.8,317.3 557.0,320.0 C558.2,322.7 559.8,325.8 562.0,328.0 C564.2,330.2 567.9,331.3 570.0,333.0 C572.1,334.7 574.2,336.5 574.5,338.0 C574.8,339.5 573.9,340.7 572.0,342.0 C570.1,343.3 566.3,345.0 563.0,345.6 C559.7,346.2 555.7,346.2 552.0,345.6 C548.3,345.0 544.7,343.4 541.0,342.0 C537.3,340.6 533.5,339.3 530.0,337.0 C526.5,334.7 523.5,331.5 520.0,328.0 C516.5,324.5 511.7,320.5 509.0,316.0 C506.3,311.5 504.3,305.3 504.0,301.0 C503.7,296.7 505.5,293.2 507.0,290.0 C508.5,286.8 510.7,283.9 513.0,282.0 C515.3,280.1 517.5,279.5 521.0,278.5 C524.5,277.5 529.5,276.4 534.0,276.0 C538.5,275.6 541.7,275.5 548.0,276.0 C554.3,276.5 563.2,277.0 572.0,279.0 C580.8,281.0 592.2,284.3 601.0,288.0 C609.8,291.7 617.8,295.7 625.0,301.0 C632.2,306.3 639.7,314.3 644.0,320.0 C648.3,325.7 649.7,330.8 651.0,335.0 C652.3,339.2 651.9,341.8 652.0,345.0 C652.1,348.2 652.2,349.7 651.4,354.0 C650.6,358.3 648.9,365.5 647.0,370.6 C645.1,375.7 643.2,379.5 640.0,384.4 C636.8,389.2 632.3,395.1 628.0,399.7 C623.7,404.3 618.7,408.4 614.0,412.0 C609.3,415.6 604.0,418.8 600.0,421.0 C596.0,423.2 593.7,424.2 590.0,425.0 C586.3,425.8 586.5,426.0 578.0,425.5 C569.5,425.0 550.3,423.2 539.0,422.0 C527.7,420.8 520.8,420.8 510.0,418.0 C499.2,415.2 486.0,409.8 474.0,405.0 C462.0,400.2 450.0,395.3 438.0,389.0 C426.0,382.7 412.0,373.8 402.0,367.0 C392.0,360.2 385.3,355.0 378.0,348.0 C370.7,341.0 363.5,332.5 358.0,325.0 C352.5,317.5 347.8,308.8 345.0,303.0 C342.2,297.2 341.9,294.0 341.2,290.0 C340.4,286.0 340.7,282.2 340.5,279.0 C340.3,275.8 340.5,273.4 340.0,271.0 C339.5,268.6 338.8,266.5 337.5,264.5 C336.2,262.5 333.8,260.2 332.0,259.0 C330.2,257.8 328.7,257.4 327.0,257.0 C325.3,256.6 324.2,256.3 322.0,256.5Z" fill="none" stroke="#0a4a0a" stroke-width="1.5"/>
<path d="M322.0,256.5 C319.8,256.7 316.4,256.6 314.0,258.0 C311.6,259.4 309.1,262.7 307.5,265.0 C305.9,267.3 305.1,269.0 304.5,272.0 C303.9,275.0 303.9,279.2 304.0,283.0 C304.1,286.8 304.0,289.7 305.0,295.0 C306.0,300.3 307.5,308.3 310.0,315.0 C312.5,321.7 316.3,328.8 320.0,335.0 C323.7,341.2 327.2,346.2 332.0,352.0 C336.8,357.8 343.3,364.5 349.0,370.0 C354.7,375.5 357.2,378.3 366.0,385.0 C374.8,391.7 390.0,402.5 402.0,410.0 C414.0,417.5 426.0,424.2 438.0,430.0 C450.0,435.8 462.0,441.0 474.0,445.0 C486.0,449.0 499.2,451.7 510.0,454.0 C520.8,456.3 527.7,457.7 539.0,459.0 C550.3,460.3 568.2,461.6 578.0,462.0 C587.8,462.4 593.2,461.9 598.0,461.5 C602.8,461.1 602.7,461.8 607.0,459.5 C611.3,457.2 618.2,451.9 624.0,448.0 C629.8,444.1 636.7,440.5 642.0,436.0 C647.3,431.5 651.8,425.8 656.0,421.0 C660.2,416.2 663.7,412.0 667.0,407.0 C670.3,402.0 673.3,396.3 676.0,391.0 C678.7,385.7 681.1,380.5 683.0,375.0 C684.9,369.5 686.6,363.0 687.5,358.0 C688.4,353.0 688.6,349.5 688.5,345.0 C688.4,340.5 688.6,337.0 687.0,331.0 C685.4,325.0 683.2,316.5 679.0,309.0 C674.8,301.5 668.8,293.0 662.0,286.0 C655.2,279.0 644.7,271.7 638.0,267.0 C631.3,262.3 626.8,260.3 622.0,258.0 C617.2,255.7 613.8,254.8 609.0,253.0 C604.2,251.2 598.8,249.0 593.0,247.3 C587.2,245.6 580.2,244.1 574.0,243.0 C567.8,241.9 561.1,241.3 555.6,240.8 C550.1,240.3 545.7,239.8 541.0,239.8 C536.3,239.8 531.3,240.4 527.5,240.8 C523.7,241.2 521.1,241.5 518.0,242.2 C514.9,242.9 512.1,243.9 509.0,245.0 C505.9,246.1 502.7,247.1 499.4,248.8 C496.1,250.4 492.4,252.3 489.0,255.0 C485.6,257.7 481.8,261.3 479.0,265.0 C476.2,268.7 474.2,273.5 472.5,277.0 C470.8,280.5 469.9,280.7 469.0,286.0 C468.1,291.3 466.3,302.2 467.0,309.0 C467.7,315.8 470.2,321.5 473.0,327.0 C475.8,332.5 480.2,337.5 484.0,342.0 C487.8,346.5 491.7,350.2 496.0,354.0 C500.3,357.8 504.5,361.5 510.0,365.0 C515.5,368.5 521.0,372.2 529.0,375.0 C537.0,377.8 548.3,381.2 558.0,381.5 C567.7,381.8 580.0,379.8 587.0,377.0 C594.0,374.2 596.7,368.7 600.0,365.0 C603.3,361.3 605.2,359.2 607.0,355.0 C608.8,350.8 610.5,344.7 611.0,340.0 C611.5,335.3 611.5,331.5 610.0,327.0 C608.5,322.5 605.2,317.2 602.0,313.0 C598.8,308.8 594.7,304.7 591.0,302.0 C587.3,299.3 583.3,298.2 580.0,297.0 C576.7,295.8 573.8,294.8 571.0,295.0 C568.2,295.2 565.3,296.2 563.0,298.0 C560.7,299.8 558.3,303.7 557.0,306.0 C555.7,308.3 555.0,309.7 555.0,312.0 C555.0,314.3 555.8,317.3 557.0,320.0 C558.2,322.7 559.8,325.8 562.0,328.0 C564.2,330.2 567.9,331.3 570.0,333.0 C572.1,334.7 574.2,336.5 574.5,338.0 C574.8,339.5 573.9,340.7 572.0,342.0 C570.1,343.3 566.3,345.0 563.0,345.6 C559.7,346.2 555.7,346.2 552.0,345.6 C548.3,345.0 544.7,343.4 541.0,342.0 C537.3,340.6 533.5,339.3 530.0,337.0 C526.5,334.7 523.5,331.5 520.0,328.0 C516.5,324.5 511.7,320.5 509.0,316.0 C506.3,311.5 504.3,305.3 504.0,301.0 C503.7,296.7 505.5,293.2 507.0,290.0 C508.5,286.8 510.7,283.9 513.0,282.0 C515.3,280.1 517.5,279.5 521.0,278.5 C524.5,277.5 529.5,276.4 534.0,276.0 C538.5,275.6 541.7,275.5 548.0,276.0 C554.3,276.5 563.2,277.0 572.0,279.0 C580.8,281.0 592.2,284.3 601.0,288.0 C609.8,291.7 617.8,295.7 625.0,301.0 C632.2,306.3 639.7,314.3 644.0,320.0 C648.3,325.7 649.7,330.8 651.0,335.0 C652.3,339.2 651.9,341.8 652.0,345.0 C652.1,348.2 652.2,349.7 651.4,354.0 C650.6,358.3 648.9,365.5 647.0,370.6 C645.1,375.7 643.2,379.5 640.0,384.4 C636.8,389.2 632.3,395.1 628.0,399.7 C623.7,404.3 618.7,408.4 614.0,412.0 C609.3,415.6 604.0,418.8 600.0,421.0 C596.0,423.2 593.7,424.2 590.0,425.0 C586.3,425.8 586.5,426.0 578.0,425.5 C569.5,425.0 550.3,423.2 539.0,422.0 C527.7,420.8 520.8,420.8 510.0,418.0 C499.2,415.2 486.0,409.8 474.0,405.0 C462.0,400.2 450.0,395.3 438.0,389.0 C426.0,382.7 412.0,373.8 402.0,367.0 C392.0,360.2 385.3,355.0 378.0,348.0 C370.7,341.0 363.5,332.5 358.0,325.0 C352.5,317.5 347.8,308.8 345.0,303.0 C342.2,297.2 341.9,294.0 341.2,290.0 C340.4,286.0 340.7,282.2 340.5,279.0 C340.3,275.8 340.5,273.4 340.0,271.0 C339.5,268.6 338.8,266.5 337.5,264.5 C336.2,262.5 333.8,260.2 332.0,259.0 C330.2,257.8 328.7,257.4 327.0,257.0 C325.3,256.6 324.2,256.3 322.0,256.5Z" fill="none" stroke="#a0eea0" stroke-width="1.7" stroke-dasharray="2.8 2.5"/>
<!-- cursor -->
<path d="M475,395 v7 M472,398.5 h6.5" stroke="#2a2a2a" stroke-width="1"/>
</svg>
</body></html>
